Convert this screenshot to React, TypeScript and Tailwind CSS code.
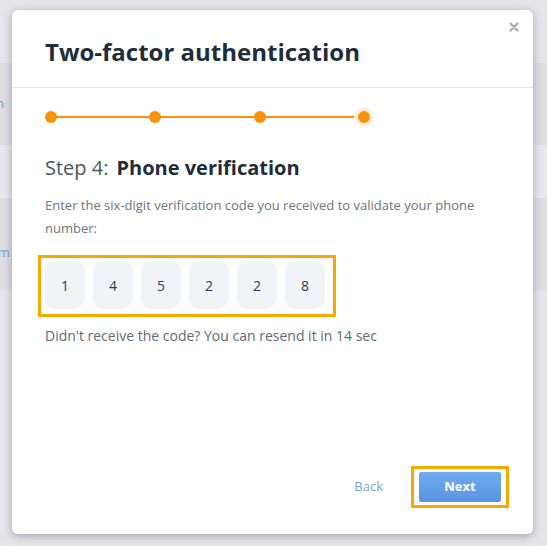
import React from "react";

const digits = ["1", "4", "5", "2", "2", "8"];

function Stepper() {
  return (
    <div className="relative mt-[19px] flex h-[20px] w-[325px] items-center justify-between">
      <div className="absolute left-[6px] right-[6px] top-[9px] h-[2px] bg-[#f7930a]" />
      {[0, 1, 2, 3].map((i) => (
        <span
          key={i}
          className={
            i === 3
              ? "relative h-[12px] w-[12px] rounded-full bg-[#f7930a] shadow-[0_0_0_4px_#fdf0e0]"
              : "relative h-[12px] w-[12px] rounded-full bg-[#f7930a]"
          }
        />
      ))}
    </div>
  );
}

export default function App() {
  return (
    <div
      className="relative h-[546px] w-[547px] overflow-hidden bg-[#e6e6ea]"
      style={{ fontFamily: '"Open Sans", "Liberation Sans", sans-serif' }}
    >
      {/* page behind the dialog */}
      <div className="flex flex-col pt-[63px] text-[13px] text-[#7aa0d0]">
        <div className="flex h-[82px] items-center bg-[#dedee3] pl-0">
          <span className="-ml-[4px]">n</span>
        </div>
        <div className="h-[53px] bg-[#e9e9ed]" />
        <div className="flex h-[92px] items-center bg-[#dedee3]">
          <span className="-ml-[10px] mt-[18px]">om</span>
        </div>
      </div>

      <div className="absolute left-[12px] top-[10px] flex h-[524px] w-[521px] flex-col rounded-[6px] bg-white shadow-[0_2px_10px_rgba(40,40,60,0.35)]">
        <button className="absolute right-[14px] top-[12px] text-[#aeaeae]">
          <svg width="10" height="10" viewBox="0 0 10 10">
            <path d="M1.5 1.5 L8.5 8.5 M8.5 1.5 L1.5 8.5" stroke="currentColor" strokeWidth="2.4" strokeLinecap="round" />
          </svg>
        </button>

        <div className="border-b border-[#e3e6ea] px-[33px] pb-[19px] pt-[26px]">
          <h1 className="text-[24px] font-bold leading-[32px] text-[#1f2d3a]">Two-factor authentication</h1>
        </div>

        <div className="flex flex-1 flex-col px-[33px]">
          <Stepper />

          <h2 className="mt-[27px] text-[20px] leading-[28px] text-[#4b5662]">
            Step 4:<span className="ml-[8px] font-bold text-[#1f2d3a]">Phone verification</span>
          </h2>

          <p className="mt-[12px] w-[450px] text-[13px] leading-[23px] text-[#6d7580]">
            Enter the six-digit verification code you received to validate your phone number:
          </p>

          <div className="-ml-[7px] mt-[15px] flex h-[62px] w-[298px] gap-[8px] border-[3px] border-[#f7a900] pl-[4px] pt-[3px]">
            {digits.map((d, i) => (
              <div
                key={i}
                className="flex h-[48px] w-[40px] items-center justify-center rounded-[10px] bg-[#f1f4f7] text-[14px] text-[#333a40]"
              >
                {d}
              </div>
            ))}
          </div>

          <p className="mt-[9px] text-[14px] leading-[20px] text-[#5f6a75]">
            Didn't receive the code? You can resend it in 14 sec
          </p>

          <div className="mt-auto mb-[26px] flex items-center justify-end gap-[28px] -mr-[9px]">
            <button className="text-[13px] text-[#7ba3d0]">Back</button>
            <div className="border-[3px] border-[#f7a900] px-[5px] py-[3px]">
              <button className="h-[30px] w-[82px] rounded-[2px] bg-gradient-to-b from-[#6eabf3] to-[#5a94e0] text-[13px] font-bold text-white">
                Next
              </button>
            </div>
          </div>
        </div>
      </div>
    </div>
  );
}
